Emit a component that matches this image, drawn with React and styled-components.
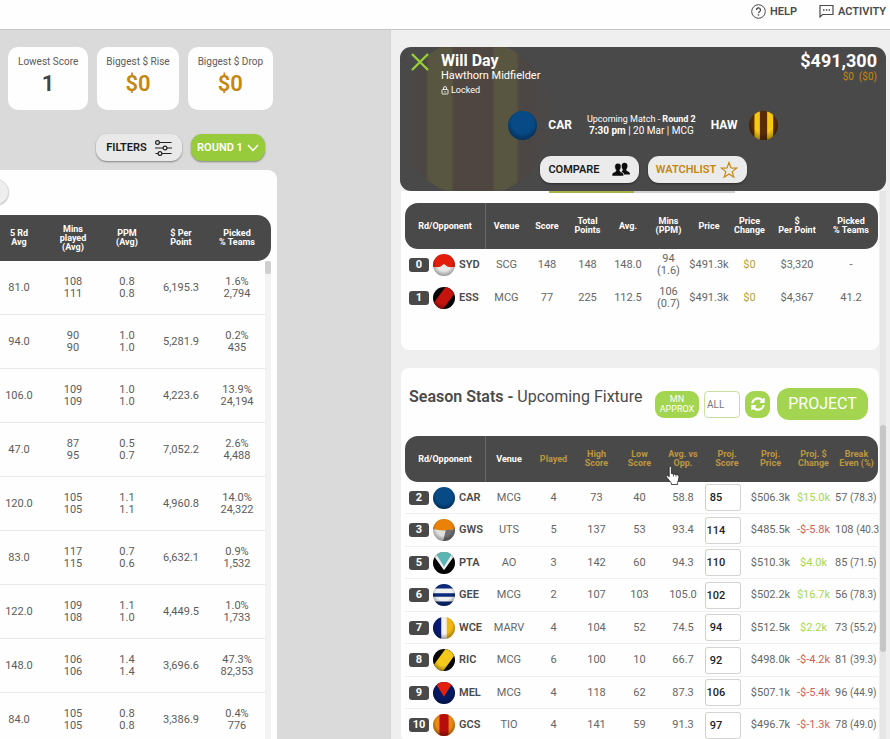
import React, { useId } from 'react';
import styled, { createGlobalStyle } from 'styled-components';
import { FaSyncAlt } from 'react-icons/fa';

const GlobalStyle = createGlobalStyle`
  *, *::before, *::after { box-sizing: border-box; }
  body {
    margin: 0;
    font-family: Roboto, "Liberation Sans", sans-serif;
    font-size: 11px;
    color: #5c5c5c;
    background: #efefef;
  }
  button, input { font-family: inherit; }
`;

const dark = '#4a4949';
const gold = '#c4870f';
const lime = '#a4d551';

/* ---------- shell ---------- */

const Page = styled.div`
  display: flex;
  flex-direction: column;
  height: 100vh;
  overflow: hidden;
`;

const TopBar = styled.header`
  flex: none;
  display: flex;
  justify-content: flex-end;
  align-items: flex-start;
  gap: 22px;
  height: 30px;
  padding: 3px 4px 0;
  background: #fefefe;
  border-bottom: 1px solid #c6c6c6;
`;

const TopLink = styled.a`
  display: flex;
  align-items: center;
  gap: 4px;
  height: 16px;
  color: #4a4a4a;
  font-size: 11px;
  font-weight: 600;
  text-decoration: none;
`;

const Columns = styled.main`
  flex: 1;
  min-height: 0;
  display: grid;
  grid-template-columns: minmax(0, 39fr) minmax(0, 50fr);
`;

/* ---------- left side ---------- */

const Overview = styled.section`
  display: flex;
  flex-direction: column;
  min-height: 0;
  overflow: hidden;
  padding: 17px 113px 0 0;
  background: #dbdada;
`;

const Cards = styled.div`
  display: grid;
  grid-template-columns: 80fr 81fr 85fr;
  gap: 9px;
  padding: 0 4px 0 8px;
`;

const Card = styled.div`
  display: flex;
  flex-direction: column;
  align-items: center;
  gap: 2px;
  height: 63px;
  padding-top: 8px;
  border-radius: 10px;
  background: #fefefe;
  white-space: nowrap;
`;

const CardLabel = styled.span`
  font-size: 10px;
  line-height: 14px;
`;

const CardValue = styled.strong`
  font-size: 22px;
  line-height: 26px;
  font-weight: 600;
  color: ${(p) => (p.$gold ? gold : '#444')};
`;

const Actions = styled.div`
  display: flex;
  justify-content: flex-end;
  gap: 9px;
  padding: 24px 12px 9px 0;
`;

const PillButton = styled.button`
  display: flex;
  align-items: center;
  justify-content: center;
  gap: ${(p) => p.$gap || 8}px;
  height: 27px;
  padding: 0 10px;
  border: 0;
  border-radius: ${(p) => p.$radius || 11}px;
  background: ${(p) => (p.$lime ? '#97cb3c' : '#e9e9e9')};
  color: ${(p) => p.$color || '#1a1a1a'};
  font-size: 11px;
  font-weight: 600;
  white-space: nowrap;
  box-shadow: 0 1px 2px rgba(0, 0, 0, 0.4);
`;

const FilterButton = styled(PillButton)`
  width: 86px;
`;

const RoundButton = styled(PillButton)`
  width: 74px;
  padding: 0 4px;
`;

const Players = styled.div`
  flex: 1;
  min-height: 0;
  overflow: hidden;
  padding-right: 6px;
  background: #fefefe;
  border-top-right-radius: 9px;
`;

const PlayersTools = styled.div`
  height: 45px;
  padding-top: 9px;
`;

const RoundKnob = styled.button`
  display: block;
  width: 26px;
  height: 26px;
  margin-left: -17px;
  padding: 0;
  border: 1px solid #d8d8d8;
  border-radius: 50%;
  background: #eeeeee;
  box-shadow: 0 1px 1px rgba(0, 0, 0, 0.2);
`;

const PlayersScroll = styled.div`
  position: relative;
`;

const HeadCell = styled.th`
  position: relative;
  padding: 0 ${(p) => p.$padRight || 0}px 0 0;
  background: ${dark};
  color: ${(p) => (p.$gold ? '#bd9740' : '#fff')};
  font-size: 9px;
  line-height: 9px;
  font-weight: 700;
  text-align: center;
  white-space: pre-line;
`;

const PlayersTable = styled.table`
  width: calc(100% + 8px);
  margin-left: -8px;
  border-collapse: separate;
  border-spacing: 0;
  table-layout: fixed;
  thead tr { height: 46px; }
  th:last-child { border-radius: 0 14px 14px 0; }
  tbody tr { height: 54px; }
`;

const PlayerCell = styled.td`
  padding: 0 ${(p) => p.$padRight || 0}px 0 0;
  border-bottom: 1px solid #eaeaea;
  font-size: 11px;
  line-height: 12px;
  text-align: center;
  white-space: pre-line;
`;

const PlayersBar = styled.div`
  position: absolute;
  top: 46px;
  right: 0;
  bottom: 0;
  width: 6px;
  background: #f3f3f3;
  &::before {
    content: '';
    display: block;
    height: 13px;
    border-radius: 2px;
    background: #cfcfcf;
  }
`;

/* ---------- right side ---------- */

const Detail = styled.section`
  display: flex;
  flex-direction: column;
  min-height: 0;
  overflow: hidden;
  padding: 17px 4px 0 9px;
  background: #efefef;
  border-left: 1px solid #d6d6d6;
`;

const Hero = styled.div`
  position: relative;
  flex: none;
  height: 144px;
  padding: 5px 9px 0;
  border-radius: 11px;
  background: ${dark};
  color: #fff;
  overflow: hidden;
`;

const Watermark = styled.svg`
  position: absolute;
  left: 2px;
  top: 0;
`;

const HeroTop = styled.div`
  position: relative;
  display: flex;
  align-items: flex-start;
  justify-content: space-between;
  height: 56px;
  padding-left: 2px;
`;

const Identity = styled.div`
  display: flex;
  gap: 12px;
`;

const CloseButton = styled.button`
  width: 18px;
  height: 20px;
  padding: 0;
  border: 0;
  background: none;
`;

const PlayerName = styled.h1`
  margin: 0;
  font-size: 16px;
  line-height: 17px;
  font-weight: 700;
`;

const Role = styled.div`
  font-size: 11px;
  line-height: 14px;
`;

const Locked = styled.div`
  display: flex;
  align-items: center;
  gap: 2px;
  margin-top: 1px;
  font-size: 9px;
  line-height: 12px;
`;

const PriceBlock = styled.div`
  text-align: right;
`;

const Price = styled.div`
  font-size: 18px;
  line-height: 17px;
  font-weight: 700;
`;

const PriceDelta = styled.div`
  color: ${gold};
  font-size: 10px;
  line-height: 16px;
  white-space: pre;
`;

const MatchRow = styled.div`
  position: relative;
  display: flex;
  align-items: center;
  justify-content: center;
  gap: 15px;
  height: 34px;
`;

const Side = styled.div`
  display: flex;
  align-items: center;
  gap: 11px;
  font-size: 12px;
  font-weight: 700;
`;

const MatchInfo = styled.div`
  font-size: 10px;
  line-height: 12px;
  text-align: center;
  white-space: nowrap;
`;

const MatchLabel = styled.div`
  font-size: 9px;
`;

const HeroActions = styled.div`
  position: relative;
  display: flex;
  justify-content: center;
  gap: 9px;
  padding-top: 14px;
`;

const HeroButton = styled(PillButton)`
  width: 99px;
  padding: 0 6px;
  background: #ebebeb;
`;

const Scroller = styled.div`
  flex: 1;
  min-height: 0;
  position: relative;
  padding: 0 7px 0 1px;
  overflow: hidden;
`;

const DetailBar = styled.div`
  position: absolute;
  top: 0;
  right: 0;
  bottom: 0;
  width: 6px;
  background: #e6e6e6;
  &::before {
    content: '';
    display: block;
    height: 227px;
    margin-top: 234px;
    border-radius: 3px;
    background: #c6c6c6;
  }
`;

const Panel = styled.div`
  padding: 0 1px 0 4px;
  border-radius: ${(p) => (p.$first ? '0 0 8px 8px' : '8px')};
  background: #fefefe;
  overflow: hidden;
  margin-bottom: 18px;
`;

const TabEdge = styled.div`
  display: flex;
  width: 186px;
  height: 2px;
  margin: 0 auto 10px 144px;
  background: #cfcfcf;
  &::before {
    content: '';
    width: 85px;
    background: #a8b04c;
  }
`;

const History = styled.div`
  min-height: 147px;
`;

const StatsTable = styled.table`
  width: 100%;
  border-collapse: separate;
  border-spacing: 0;
  table-layout: fixed;
  thead tr { height: 46px; }
  th:first-child {
    border-radius: 13px 0 0 13px;
    border-right: 1px solid #6a6969;
  }
  th:last-child { border-radius: 0 13px 13px 0; }
  tbody tr { height: ${(p) => p.$row}px; }
  tbody tr:nth-child(even) { height: 33px; }
`;

const Col = styled.col`
  width: ${(p) => p.$w}px;
`;

const Cell = styled.td`
  padding: 0;
  border-bottom: 1px solid ${(p) => (p.$line ? '#efefef' : 'transparent')};
  color: ${(p) => p.$color || '#666'};
  font-size: 11px;
  line-height: 12px;
  text-align: ${(p) => (p.$left ? 'left' : 'center')};
  white-space: ${(p) => (p.$left ? 'nowrap' : 'pre-line')};
`;

const Opponent = styled.div`
  display: flex;
  align-items: center;
  gap: 4px;
  padding-left: 4px;
  color: #4a4a4a;
  font-weight: 600;
`;

const RoundBadge = styled.span`
  width: 20px;
  height: 14px;
  border-radius: 3px;
  background: ${dark};
  color: #fff;
  font-size: 11px;
  line-height: 14px;
  font-weight: 700;
  text-align: center;
`;

const ScoreInput = styled.input`
  display: block;
  width: 36px;
  height: 27px;
  padding: 0 14px 0 0;
  border: 1px solid #d4d4d4;
  border-left-color: #c5e293;
  border-radius: 3px;
  background: #fff;
  color: #222;
  font-size: 11px;
  font-weight: 500;
  text-align: center;
`;

const Small = styled.span`
  font-size: 10px;
`;

const SeasonHead = styled.div`
  display: flex;
  align-items: center;
  justify-content: space-between;
  height: 68px;
  padding: 4px 10px 0 4px;
`;

const SeasonTitle = styled.h2`
  margin: 0 0 14px;
  color: #4a4a4a;
  font-size: 16px;
  line-height: 20px;
  font-weight: 600;
  white-space: nowrap;
`;

const Light = styled.span`
  font-weight: 400;
`;

const Controls = styled.div`
  display: flex;
  align-items: center;
  gap: 5px;
`;

const LimeButton = styled.button`
  display: flex;
  align-items: center;
  justify-content: center;
  width: ${(p) => p.$w}px;
  height: ${(p) => p.$h || 27}px;
  padding: 0;
  border: 0;
  border-radius: ${(p) => p.$radius || 9}px;
  background: ${lime};
  color: #fff;
  font-size: ${(p) => p.$size || 9}px;
  line-height: 10px;
  white-space: pre-line;
`;

const ProjectButton = styled(LimeButton)`
  margin-left: 2px;
`;

const FilterInput = styled.input`
  width: 36px;
  height: 27px;
  padding: 0 2px;
  border: 1px solid #c9dfa0;
  border-radius: 4px;
  background: #fff;
  color: #777;
  font-size: 10px;
`;

const Pointer = styled.svg`
  position: absolute;
  left: 4px;
  top: 30px;
  z-index: 2;
`;

/* ---------- drawings ---------- */

const guernseys = {
  CAR: <rect width="24" height="24" fill="#074a86" />,
  HAW: (
    <>
      <rect width="24" height="24" fill="#5a2c06" />
      <path d="M4.500 0H9V24H4.500zM15 0H20V24H15z" fill="#f6c80e" />
    </>
  ),
  SYD: (
    <>
      <rect width="24" height="24" fill="#e8e8e8" />
      <path d="M0 0H24V14Q20 15 16 14Q14 12 12 11Q10 12 8 14Q4 15 0 14z" fill="#e41c0a" />
    </>
  ),
  ESS: (
    <>
      <rect width="24" height="24" fill="#060606" />
      <path d="M15-2L25 5L9 27L-1 20z" fill="#c5130f" />
    </>
  ),
  GWS: (
    <>
      <rect width="24" height="24" fill="#e0e0e0" />
      <path d="M0 0H24V11Q12 14 0 11z" fill="#ea8209" />
      <path d="M14 12Q20 12 24 11V24H11z" fill="#6f6f6f" />
    </>
  ),
  PTA: (
    <>
      <rect width="24" height="24" fill="#050505" />
      <path d="M0 3L12 20L24 3V0H0z" fill="#f0f0f0" />
      <path d="M2 0L12 16L22 0z" fill="#5bb5b5" />
    </>
  ),
  GEE: (
    <>
      <rect width="24" height="24" fill="#f0f0f0" />
      <path d="M0 0H24V5H0zM0 10H24V14H0zM0 19H24V24H0z" fill="#0b2a7a" />
    </>
  ),
  WCE: (
    <>
      <rect width="24" height="24" fill="#f2f2f2" />
      <path d="M0 0H9V24H0z" fill="#0a1c72" />
      <path d="M15 0H24V24H15z" fill="#f0b712" />
    </>
  ),
  RIC: (
    <>
      <rect width="24" height="24" fill="#070707" />
      <path d="M15-2L25 5L9 27L-1 20z" fill="#f2c81a" />
    </>
  ),
  MEL: (
    <>
      <rect width="24" height="24" fill="#061a63" />
      <path d="M2 0L12 16L22 0z" fill="#e3200d" />
    </>
  ),
  GCS: (
    <>
      <rect width="24" height="24" fill="#e88a10" />
      <path d="M7 0H17V24H7z" fill="#b80d0d" />
    </>
  ),
};

function Ball({ team, size = 22 }) {
  const id = useId();
  return (
    <svg width={size} height={size} viewBox="0 0 24 24" role="img" aria-label={`${team} ball`}>
      <defs>
        <clipPath id={`${id}c`}>
          <circle cx="12" cy="12" r="12" />
        </clipPath>
        <radialGradient id={`${id}g`} cx="0.5" cy="0.4" r="0.6">
          <stop offset="0.6" stopColor="#000" stopOpacity="0" />
          <stop offset="1" stopColor="#000" stopOpacity="0.35" />
        </radialGradient>
      </defs>
      <g clipPath={`url(#${id}c)`}>
        {guernseys[team]}
        <rect width="24" height="24" fill={`url(#${id}g)`} />
      </g>
    </svg>
  );
}

const HeroWatermark = () => (
  <Watermark width="152" height="144" viewBox="0 0 152 144" aria-hidden="true">
    <defs>
      <clipPath id="mark">
        <circle cx="72" cy="71" r="78" />
      </clipPath>
      <filter id="soft">
        <feGaussianBlur stdDeviation="1" />
      </filter>
      <linearGradient id="edge">
        <stop offset="0" stopColor="#4c4644" stopOpacity="0" />
        <stop offset="0.15" stopColor="#4c4644" />
        <stop offset="0.8" stopColor="#4c4644" />
        <stop offset="1" stopColor="#4c4644" stopOpacity="0" />
      </linearGradient>
    </defs>
    <g clipPath="url(#mark)">
      <rect width="152" height="144" fill="url(#edge)" />
      <rect x="25" width="26" height="144" fill="#58543f" filter="url(#soft)" />
      <rect x="91" width="25" height="144" fill="#58543f" filter="url(#soft)" />
      <rect x="51" width="40" height="144" fill="#4f4641" />
    </g>
  </Watermark>
);

const HelpIcon = () => (
  <svg width="15" height="15" viewBox="0 0 15 15" fill="none" stroke="#4a4a4a" aria-hidden="true">
    <circle cx="7.500" cy="7.500" r="6.800" />
    <path d="M5.500 6a2 2 0 1 1 3 1.700c-.7.400-1 .7-1 1.500" strokeWidth="1.300" />
    <path d="M7.500 10.300v1.300" strokeWidth="1.400" />
  </svg>
);

const ActivityIcon = () => (
  <svg width="15" height="14" viewBox="0 0 15 14" fill="none" stroke="#4a4a4a" aria-hidden="true">
    <path d="M1 13V1.500H14V10.500H3.500z" strokeWidth="1.200" />
    <path d="M4 6H5.500M6.800 6H8.300M9.600 6H11.100" strokeWidth="1.500" />
  </svg>
);

const SlidersIcon = () => (
  <svg width="17" height="16" viewBox="0 0 17 16" fill="none" stroke="#222" strokeWidth="1.200" aria-hidden="true">
    <path d="M4.500 2.500H16.500M0 8H8M12 8H17M0.500 13.500H3M7 13.500H16.500" />
    <circle cx="2.500" cy="2.500" r="1.900" />
    <circle cx="10" cy="8" r="1.900" />
    <circle cx="5" cy="13.500" r="1.900" />
  </svg>
);

const ChevronIcon = () => (
  <svg width="12" height="8" viewBox="0 0 12 8" fill="none" stroke="#fff" strokeWidth="1.500" aria-hidden="true">
    <path d="M1 1L6 6.500L11 1" />
  </svg>
);

const CloseIcon = () => (
  <svg width="18" height="20" viewBox="0 0 18 20" fill="none" stroke="#96d035" strokeWidth="2.400" aria-hidden="true">
    <path d="M1 2L17 18M17 2L1 18" />
  </svg>
);

const LockIcon = () => (
  <svg width="8" height="9" viewBox="0 0 8 9" fill="none" stroke="#e8e8e8" aria-hidden="true">
    <rect x="1" y="3.500" width="6" height="4.500" rx="0.500" />
    <path d="M2.500 3.500V2a1.500 1.500 0 0 1 3 0V3.500M4 5V6.500" />
  </svg>
);

const PeopleIcon = () => (
  <svg width="18" height="15" viewBox="0 0 18 15" fill="#0c0c0c" aria-hidden="true">
    <path d="M12.500.800c2 0 3.200 1.300 3 3.400-.1 1.500-.7 2.300-1.200 3 0 1.300.3 1.700 1.700 2.200 1.400.5 2 1.200 2 3.100H12c-.3-1.600-1.200-2.300-2.600-2.800 1-.5 1.300-1 1.300-2.400-.7-.9-1.100-1.800-1.100-3.100 0-2.100 1-3.400 2.900-3.400z" />
    <path d="M6 1.300c2 0 3.200 1.400 3 3.600-.1 1.500-.6 2.300-1.200 3.100 0 1.400.4 1.700 1.800 2.200 1.500.5 2.100 1.400 2.100 3.800H0c0-2.400.6-3.300 2.100-3.800C3.600 9.700 4 9.400 4 8 3.400 7.200 2.900 6.400 2.800 4.900 2.700 2.700 4 1.300 6 1.300z" stroke="#ebebeb" strokeWidth="0.500" />
  </svg>
);

const StarIcon = () => (
  <svg width="18" height="18" viewBox="0 0 18 18" fill="none" stroke={gold} strokeWidth="1.200" aria-hidden="true">
    <path d="M9 1.500L11 6.900L16.700 7.100L12.200 10.600L13.800 16.200L9 13L4.200 16.200L5.800 10.600L1.300 7.100L7 6.900z" />
  </svg>
);

const HandPointer = () => (
  <Pointer width="16" height="20" viewBox="0 0 16 20" aria-hidden="true">
    <path
      d="M4.200 1.500c0-1.300 2.200-1.300 2.200 0v6l4.600.9c1.700.3 3 .8 3 2.400 0 2.400-.9 4-1.400 5.800v1.900H6.300v-1.600C4.500 15.300 3.300 12.900 1.500 11c-.7-1 .6-2 1.500-1.300l1.200 1.100z"
      fill="#fff"
      stroke="#222"
      strokeWidth="0.800"
    />
    <path d="M8.500 8v2.500M11 8.500v2.200" stroke="#222" strokeWidth="0.700" />
  </Pointer>
);

/* ---------- data ---------- */

const playerHeads = ['5 Rd\nAvg', 'Mins\nplayed\n(Avg)', 'PPM\n(Avg)', '$ Per\nPoint', 'Picked\n% Teams'];

const players = [
  ['81.0', '108\n111', '0.8\n0.8', '6,195.3', '1.6%\n2,794'],
  ['94.0', '90\n90', '1.0\n1.0', '5,281.9', '0.2%\n435'],
  ['106.0', '109\n109', '1.0\n1.0', '4,223.6', '13.9%\n24,194'],
  ['47.0', '87\n95', '0.5\n0.7', '7,052.2', '2.6%\n4,488'],
  ['120.0', '105\n105', '1.1\n1.1', '4,960.8', '14.0%\n24,322'],
  ['83.0', '117\n115', '0.7\n0.6', '6,632.1', '0.9%\n1,532'],
  ['122.0', '109\n108', '1.1\n1.0', '4,449.5', '1.0%\n1,733'],
  ['148.0', '106\n106', '1.4\n1.4', '3,696.6', '47.3%\n82,353'],
  ['84.0', '105\n105', '0.8\n0.8', '3,386.9', '0.4%\n776'],
];

const historyHeads = [
  'Rd/Opponent', 'Venue', 'Score', 'Total\nPoints', 'Avg.', 'Mins\n(PPM)', 'Price', 'Price\nChange', '$\nPer Point', 'Picked\n% Teams',
];
const historyWidths = [81, 41, 40, 41, 40, 41, 40, 41, 54, 54];

const history = [
  ['0', 'SYD', 'SCG', '148', '148', '148.0', '94\n(1.6)', '$491.3k', '$0', '$3,320', '-'],
  ['1', 'ESS', 'MCG', '77', '225', '112.5', '106\n(0.7)', '$491.3k', '$0', '$4,367', '41.2'],
];

const fixtureHeads = [
  'Rd/Opponent', 'Venue', 'Played', 'High\nScore', 'Low\nScore', 'Avg. vs\nOpp.', 'Proj.\nScore', 'Proj.\nPrice', 'Proj. $\nChange', 'Break\nEven (%)',
];
const fixtureWidths = [81, 46, 43, 43, 43, 44, 44, 43, 43, 43];

const fixtures = [
  ['2', 'CAR', 'MCG', '4', '73', '40', '58.8', '85', '$506.3k', '$15.0k', '57', '(78.3)'],
  ['3', 'GWS', 'UTS', '5', '137', '53', '93.4', '114', '$485.5k', '-$-5.8k', '108', '(40.3'],
  ['5', 'PTA', 'AO', '3', '142', '60', '94.3', '110', '$510.3k', '$4.0k', '85', '(71.5)'],
  ['6', 'GEE', 'MCG', '2', '107', '103', '105.0', '102', '$502.2k', '$16.7k', '56', '(78.3)'],
  ['7', 'WCE', 'MARV', '4', '104', '52', '74.5', '94', '$512.5k', '$2.2k', '73', '(55.2)'],
  ['8', 'RIC', 'MCG', '6', '100', '10', '66.7', '92', '$498.0k', '-$-4.2k', '81', '(39.3)'],
  ['9', 'MEL', 'MCG', '4', '118', '62', '87.3', '106', '$507.1k', '-$-5.4k', '96', '(44.9)'],
  ['10', 'GCS', 'TIO', '4', '141', '59', '91.3', '97', '$496.7k', '-$-1.3k', '78', '(49.0)'],
];

/* ---------- sections ---------- */

function OpponentCell({ round, team, line }) {
  return (
    <Cell $line={line}>
      <Opponent>
        <RoundBadge>{round}</RoundBadge>
        <Ball team={team} />
        {team}
      </Opponent>
    </Cell>
  );
}

function PlayersPanel() {
  const last = playerHeads.length - 1;
  return (
    <Players>
      <PlayersTools>
        <RoundKnob aria-label="Next" />
      </PlayersTools>
      <PlayersScroll>
        <PlayersTable>
          <colgroup>
            <Col $w={54} />
            <Col $w={54} />
            <Col $w={54} />
            <Col $w={54} />
            <Col $w={63} />
          </colgroup>
          <thead>
            <tr>
              {playerHeads.map((h, i) => (
                <HeadCell key={h} $padRight={i === last ? 5 : 0}>{h}</HeadCell>
              ))}
            </tr>
          </thead>
          <tbody>
            {players.map((row) => (
              <tr key={row[3]}>
                {row.map((v, i) => (
                  <PlayerCell key={i} $padRight={i === last ? 5 : 0}>{v}</PlayerCell>
                ))}
              </tr>
            ))}
          </tbody>
        </PlayersTable>
        <PlayersBar />
      </PlayersScroll>
    </Players>
  );
}

function HistoryTable() {
  return (
    <StatsTable $row={33}>
      <colgroup>
        {historyWidths.map((w, i) => <Col key={i} $w={w} />)}
      </colgroup>
      <thead>
        <tr>{historyHeads.map((h) => <HeadCell key={h}>{h}</HeadCell>)}</tr>
      </thead>
      <tbody>
        {history.map(([round, team, ...rest]) => (
          <tr key={round}>
            <OpponentCell round={round} team={team} />
            {rest.map((v, i) => (
              <Cell key={i} $color={v === '$0' ? '#b7a32c' : undefined}>{v}</Cell>
            ))}
          </tr>
        ))}
      </tbody>
    </StatsTable>
  );
}

function FixtureTable() {
  return (
    <StatsTable $row={32}>
      <colgroup>
        {fixtureWidths.map((w, i) => <Col key={i} $w={w} />)}
      </colgroup>
      <thead>
        <tr>
          {fixtureHeads.map((h, i) => (
            <HeadCell key={h} $gold={i > 1}>
              {h}
              {i === 5 && <HandPointer />}
            </HeadCell>
          ))}
        </tr>
      </thead>
      <tbody>
        {fixtures.map(([round, team, venue, played, high, low, avg, score, price, change, even, pct]) => (
          <tr key={round}>
            <OpponentCell round={round} team={team} line />
            {[venue, played, high, low, avg].map((v, i) => <Cell key={i} $line>{v}</Cell>)}
            <Cell $line>
              <ScoreInput defaultValue={score} aria-label={`Projected score, round ${round}`} />
            </Cell>
            <Cell $line>{price}</Cell>
            <Cell $line $color={change.startsWith('-') ? '#d0605a' : '#a5d94f'}>{change}</Cell>
            <Cell $line $left>{even} <Small>{pct}</Small></Cell>
          </tr>
        ))}
      </tbody>
    </StatsTable>
  );
}

export default function App() {
  return (
    <Page>
      <GlobalStyle />
      <TopBar>
        <TopLink href="#help"><HelpIcon />HELP</TopLink>
        <TopLink href="#activity"><ActivityIcon />ACTIVITY</TopLink>
      </TopBar>
      <Columns>
        <Overview>
          <Cards>
            <Card><CardLabel>Lowest Score</CardLabel><CardValue>1</CardValue></Card>
            <Card><CardLabel>Biggest $ Rise</CardLabel><CardValue $gold>$0</CardValue></Card>
            <Card><CardLabel>Biggest $ Drop</CardLabel><CardValue $gold>$0</CardValue></Card>
          </Cards>
          <Actions>
            <FilterButton>FILTERS<SlidersIcon /></FilterButton>
            <RoundButton $lime $color="#fff" $gap={4}>ROUND 1<ChevronIcon /></RoundButton>
          </Actions>
          <PlayersPanel />
        </Overview>

        <Detail>
          <Hero>
            <HeroWatermark />
            <HeroTop>
              <Identity>
                <CloseButton aria-label="Close"><CloseIcon /></CloseButton>
                <div>
                  <PlayerName>Will Day</PlayerName>
                  <Role>Hawthorn Midfielder</Role>
                  <Locked><LockIcon />Locked</Locked>
                </div>
              </Identity>
              <PriceBlock>
                <Price>$491,300</Price>
                <PriceDelta>{'$0  ($0)'}</PriceDelta>
              </PriceBlock>
            </HeroTop>
            <MatchRow>
              <Side><Ball team="CAR" size={29} />CAR</Side>
              <MatchInfo>
                <MatchLabel>Upcoming Match - <b>Round 2</b></MatchLabel>
                <b>7:30 pm</b> | 20 Mar | MCG
              </MatchInfo>
              <Side>HAW<Ball team="HAW" size={29} /></Side>
            </MatchRow>
            <HeroActions>
              <HeroButton $gap={12}>COMPARE<PeopleIcon /></HeroButton>
              <HeroButton $gap={4} $color={gold}>WATCHLIST<StarIcon /></HeroButton>
            </HeroActions>
          </Hero>
          <Scroller>
            <Panel $first>
              <TabEdge />
              <History><HistoryTable /></History>
            </Panel>
            <Panel>
              <SeasonHead>
                <SeasonTitle>Season Stats - <Light>Upcoming Fixture</Light></SeasonTitle>
                <Controls>
                  <LimeButton $w={44}>{'MN\nAPPROX'}</LimeButton>
                  <FilterInput defaultValue="ALL" aria-label="Opponent filter" />
                  <LimeButton $w={25} $size={14} aria-label="Refresh"><FaSyncAlt /></LimeButton>
                  <ProjectButton $w={91} $h={32} $size={16} $radius={12}>PROJECT</ProjectButton>
                </Controls>
              </SeasonHead>
              <FixtureTable />
            </Panel>
            <DetailBar />
          </Scroller>
        </Detail>
      </Columns>
    </Page>
  );
}
